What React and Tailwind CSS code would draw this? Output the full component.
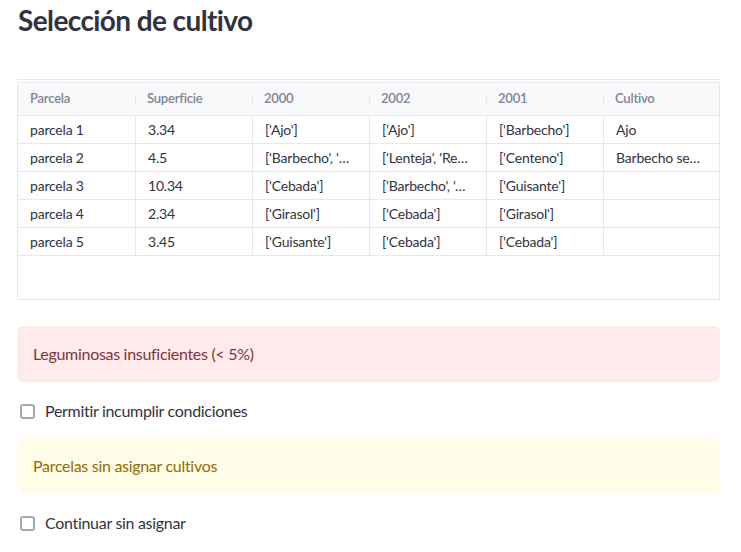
import React from 'react';

const columns = ['Parcela', 'Superficie', '2000', '2002', '2001', 'Cultivo'];

const rows = [
  ['parcela 1', '3.34', "['Ajo']", "['Ajo']", "['Barbecho']", 'Ajo'],
  ['parcela 2', '4.5', "['Barbecho', 'Veza']", "['Lenteja', 'Remolacha']", "['Centeno']", 'Barbecho semillado'],
  ['parcela 3', '10.34', "['Cebada']", "['Barbecho', 'Avena']", "['Guisante']", ''],
  ['parcela 4', '2.34', "['Girasol']", "['Cebada']", "['Girasol']", ''],
  ['parcela 5', '3.45', "['Guisante']", "['Cebada']", "['Cebada']", ''],
];

function Checkbox({ label }) {
  return (
    <label className="flex items-center gap-[10px] h-[24px] pl-[3px]">
      <span className="w-[15px] h-[15px] shrink-0 rounded-[3px] border-2 border-[#a3a8b4] bg-white" />
      <span className="text-[16px] tracking-[-0.3px] text-[#31333f]">{label}</span>
    </label>
  );
}

export default function App() {
  return (
    <div className="w-[741px] h-[552px] bg-white overflow-hidden px-[17px] text-[#31333f]" style={{ fontFamily: 'Lato, "Liberation Sans", sans-serif' }}>
      <h1 className="text-[28px] font-bold leading-[40px] tracking-[-0.6px] ml-[1px]">Selección de cultivo</h1>

      {/* data table */}
      <div className="mt-[39px] w-[703px] border-t border-[#e6e8ee]">
        <div className="mt-[2px] border-l border-r border-b border-[#e6e8ee] h-[218px]">
          <div className="grid grid-cols-[117px_117px_117px_117px_117px_117px] h-[34px] bg-[#f8f9fb] border-b border-[#e6e8ee] border-t">
            {columns.map((col, i) => (
              <div key={col} className="relative flex items-center px-[12px] text-[13px] font-semibold tracking-[-0.2px] text-[#808495]">
                {i > 0 && <span className="absolute left-0 top-[12px] h-[10px] w-px bg-[#e6e8ee]" />}
                {col}
              </div>
            ))}
          </div>
          {rows.map((row) => (
            <div key={row[0]} className="grid grid-cols-[117px_117px_117px_117px_117px_117px] h-[28px] border-b border-[#e6e8ee]">
              {row.map((cell, i) => (
                <div key={i} className={`flex items-center px-[12px] text-[14px] tracking-[-0.2px] text-[#31333f] whitespace-nowrap overflow-hidden ${i > 0 ? 'border-l border-[#e6e8ee]' : ''}`}>
                  <span className="truncate">{cell}</span>
                </div>
              ))}
            </div>
          ))}
        </div>
      </div>

      {/* error alert */}
      <div className="mt-[26px] w-[703px] h-[56px] rounded-[6px] bg-[#ffebeb] flex items-center px-[16px] text-[16px] tracking-[-0.3px] text-[#7d353b]">
        Leguminosas insuficientes (&lt; 5%)
      </div>

      <div className="mt-[17px]">
        <Checkbox label="Permitir incumplir condiciones" />
      </div>

      {/* warning alert */}
      <div className="mt-[15px] w-[703px] h-[56px] rounded-[6px] bg-[#fffce7] flex items-center px-[16px] text-[16px] tracking-[-0.3px] text-[#926c05]">
        Parcelas sin asignar cultivos
      </div>

      <div className="mt-[17px]">
        <Checkbox label="Continuar sin asignar" />
      </div>
    </div>
  );
}
